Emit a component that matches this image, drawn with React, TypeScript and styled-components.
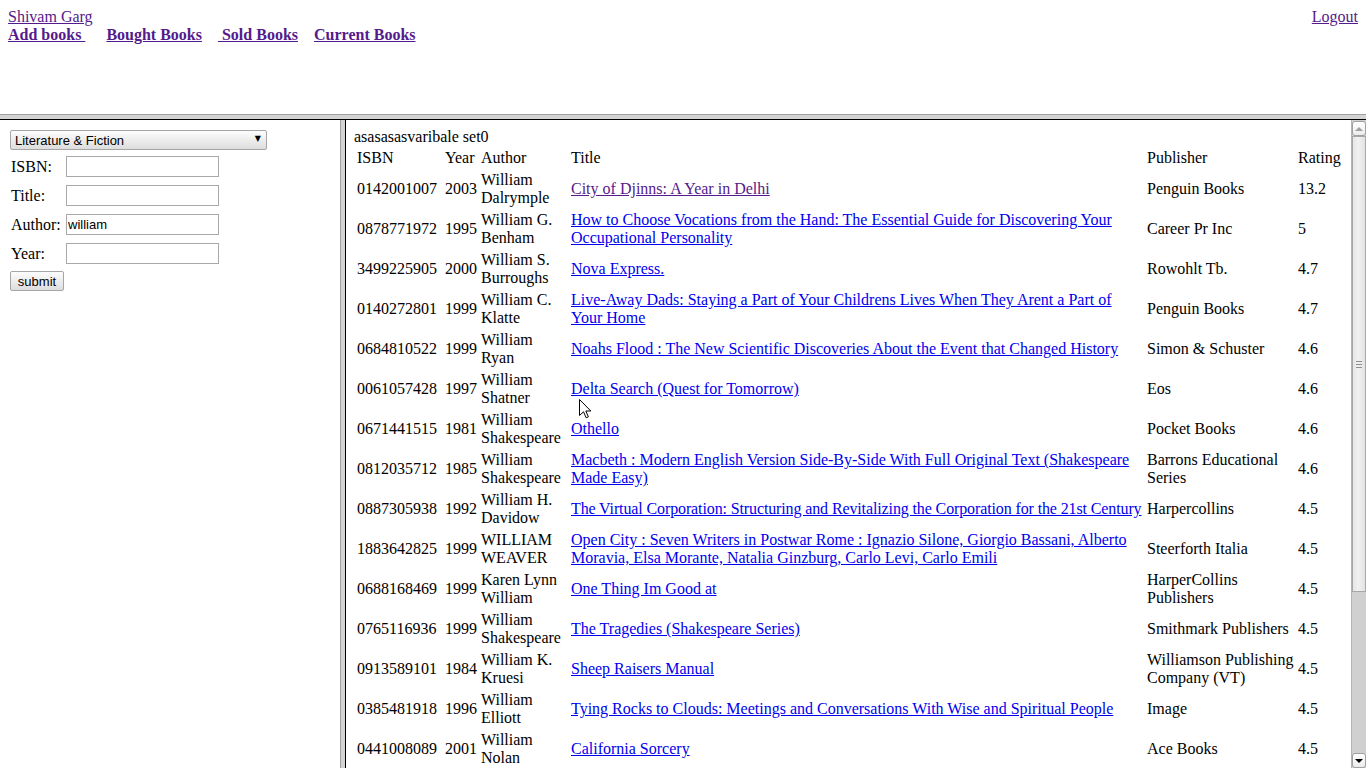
import React from 'react';
import styled, { createGlobalStyle } from 'styled-components';

const GlobalStyle = createGlobalStyle`
  html, body {
    margin: 0;
    height: 100%;
    overflow: hidden;
  }
  body {
    font-family: "Liberation Serif", "Times New Roman", serif;
    font-size: 16px;
    color: #000;
    background: #fff;
  }
  #root {
    height: 100%;
  }
`;

const Frameset = styled.div`
  display: grid;
  grid-template-rows: 114px 6px 1fr;
  height: 100vh;
`;

const TopFrame = styled.header`
  display: flex;
  justify-content: space-between;
  align-items: flex-start;
  padding: 8px;
  line-height: 18px;
`;

const UserBlock = styled.div`
  display: flex;
  flex-direction: column;
`;

const PlainLink = styled.a<{ $visited?: boolean; $tight?: boolean }>`
  color: ${(p) => (p.$visited ? '#551a8b' : '#0000ee')};
  text-decoration: underline;
  letter-spacing: ${(p) => (p.$tight ? '-0.12px' : 'normal')};
  cursor: pointer;
`;

const NavRow = styled.nav`
  display: flex;
  gap: 16px;
`;

const NavLink = styled.a<{ $extra?: number }>`
  color: #551a8b;
  font-weight: bold;
  text-decoration: underline;
  white-space: pre;
  margin-right: ${(p) => p.$extra || 0}px;
  cursor: pointer;
`;

const HSep = styled.div`
  box-sizing: border-box;
  border-top: 1px solid #a0a0a0;
  border-bottom: 1px solid #000;
  background: #d4d4d4;
`;

const BottomRow = styled.div`
  display: grid;
  grid-template-columns: 340px 6px 1fr;
  min-height: 0;
`;

const VSep = styled.div`
  box-sizing: border-box;
  border-left: 1px solid #a0a0a0;
  border-right: 1px solid #000;
  background: #d4d4d4;
`;

const LeftFrame = styled.form`
  padding: 10px 0 0 10px;
  display: flex;
  flex-direction: column;
  align-items: flex-start;
`;

const SelectWrap = styled.div`
  position: relative;
  width: 257px;
  height: 20px;
  &::after {
    content: '▼';
    position: absolute;
    right: 6px;
    top: 4px;
    font-family: "DejaVu Sans", sans-serif;
    font-size: 8px;
    line-height: 10px;
    color: #000;
    pointer-events: none;
  }
`;

const Select = styled.select`
  appearance: none;
  width: 100%;
  height: 20px;
  box-sizing: border-box;
  margin: 0;
  padding: 0 0 0 4px;
  border: 1px solid #a6a6a6;
  border-radius: 2px;
  background: linear-gradient(#fdfdfd, #dddddd);
  font-family: "Liberation Sans", Arial, sans-serif;
  font-size: 13px;
  color: #000;
`;

const FieldGrid = styled.div`
  display: grid;
  grid-template-columns: 49px 153px;
  column-gap: 6px;
  row-gap: 8px;
  align-items: center;
  margin: 6px 0 0 1px;
`;

const Label = styled.label`
  font-size: 16px;
  line-height: 18px;
`;

const TextInput = styled.input`
  box-sizing: border-box;
  width: 153px;
  height: 21px;
  margin: 0;
  padding: 1px 1px;
  border: 1px solid #a9a9a9;
  font-family: "Liberation Sans", Arial, sans-serif;
  font-size: 13px;
  color: #000;
  outline: none;
`;

const SubmitButton = styled.button`
  margin-top: 7px;
  box-sizing: border-box;
  width: 54px;
  height: 20px;
  padding: 0;
  border: 1px solid #a6a6a6;
  border-radius: 2px;
  background: linear-gradient(#fdfdfd, #dddddd);
  font-family: "Liberation Sans", Arial, sans-serif;
  font-size: 13px;
  color: #000;
`;

const RightFrame = styled.div`
  display: flex;
  min-height: 0;
  overflow: hidden;
`;

const Content = styled.div`
  flex: 1;
  min-width: 0;
  overflow: hidden;
  padding: 8px;
  line-height: 18px;
`;

const Note = styled.div`
  height: 18px;
`;

const BookTable = styled.table`
  width: 100%;
  table-layout: fixed;
  border-collapse: separate;
  border-spacing: 2px;
  font-size: 16px;
  line-height: 18px;
  th,
  td {
    padding: 1px;
    text-align: left;
    vertical-align: middle;
  }
  th {
    font-weight: normal;
  }
`;

const Col = styled.col<{ $w?: number }>`
  width: ${(p) => (p.$w ? `${p.$w}px` : 'auto')};
`;

const ScrollBar = styled.div`
  width: 15px;
  display: flex;
  flex-direction: column;
  background: #d0d0d0;
  box-sizing: border-box;
  border-left: 1px solid #b5b5b5;
  padding-top: 1px;
`;

const ScrollButton = styled.div<{ $down?: boolean; $disabled?: boolean }>`
  height: 15px;
  flex: none;
  box-sizing: border-box;
  border: 1px solid #a0a0a0;
  border-radius: 3px;
  background: linear-gradient(#ffffff, #ececec);
  display: flex;
  align-items: center;
  justify-content: center;
  &::before {
    content: '';
    width: 0;
    height: 0;
    border-left: 4px solid transparent;
    border-right: 4px solid transparent;
    ${(p) =>
      p.$down
        ? `border-top: 4px solid ${p.$disabled ? '#a0a0a0' : '#000'};`
        : `border-bottom: 4px solid ${p.$disabled ? '#a0a0a0' : '#000'};`}
  }
`;

const Thumb = styled.div<{ $size: number }>`
  height: ${(p) => p.$size}px;
  flex: none;
  box-sizing: border-box;
  border: 1px solid #a8a8a8;
  background: linear-gradient(90deg, #e6e6e6 0%, #f1f1f1 45%, #e3e3e3 100%);
  display: flex;
  align-items: center;
  justify-content: center;
`;

const Grip = styled.div`
  width: 6px;
  height: 7px;
  background: repeating-linear-gradient(#8e8e8e 0 1px, transparent 1px 3px);
`;

const TrackFill = styled.div`
  flex: 1;
`;

const Cursor = styled.svg`
  position: fixed;
  left: 579px;
  top: 399px;
  pointer-events: none;
`;

type Book = {
  isbn: string;
  year: string;
  author: string;
  title: string;
  publisher: string;
  rating: string;
  visited?: boolean;
  tight?: boolean;
};

const books: Book[] = [
  { isbn: '0142001007', year: '2003', author: 'William Dalrymple', title: 'City of Djinns: A Year in Delhi', publisher: 'Penguin Books', rating: '13.2', visited: true },
  { isbn: '0878771972', year: '1995', author: 'William G. Benham', title: 'How to Choose Vocations from the Hand: The Essential Guide for Discovering Your Occupational Personality', publisher: 'Career Pr Inc', rating: '5' },
  { isbn: '3499225905', year: '2000', author: 'William S. Burroughs', title: 'Nova Express.', publisher: 'Rowohlt Tb.', rating: '4.7' },
  { isbn: '0140272801', year: '1999', author: 'William C. Klatte', title: 'Live-Away Dads: Staying a Part of Your Childrens Lives When They Arent a Part of Your Home', publisher: 'Penguin Books', rating: '4.7' },
  { isbn: '0684810522', year: '1999', author: 'William Ryan', title: 'Noahs Flood : The New Scientific Discoveries About the Event that Changed History', publisher: 'Simon & Schuster', rating: '4.6' },
  { isbn: '0061057428', year: '1997', author: 'William Shatner', title: 'Delta Search (Quest for Tomorrow)', publisher: 'Eos', rating: '4.6' },
  { isbn: '0671441515', year: '1981', author: 'William Shakespeare', title: 'Othello', publisher: 'Pocket Books', rating: '4.6' },
  { isbn: '0812035712', year: '1985', author: 'William Shakespeare', title: 'Macbeth : Modern English Version Side-By-Side With Full Original Text (Shakespeare Made Easy)', publisher: 'Barrons Educational Series', rating: '4.6' },
  { isbn: '0887305938', year: '1992', author: 'William H. Davidow', title: 'The Virtual Corporation: Structuring and Revitalizing the Corporation for the 21st Century', publisher: 'Harpercollins', rating: '4.5', tight: true },
  { isbn: '1883642825', year: '1999', author: 'WILLIAM WEAVER', title: 'Open City : Seven Writers in Postwar Rome : Ignazio Silone, Giorgio Bassani, Alberto Moravia, Elsa Morante, Natalia Ginzburg, Carlo Levi, Carlo Emili', publisher: 'Steerforth Italia', rating: '4.5' },
  { isbn: '0688168469', year: '1999', author: 'Karen Lynn William', title: 'One Thing Im Good at', publisher: 'HarperCollins Publishers', rating: '4.5' },
  { isbn: '0765116936', year: '1999', author: 'William Shakespeare', title: 'The Tragedies (Shakespeare Series)', publisher: 'Smithmark Publishers', rating: '4.5' },
  { isbn: '0913589101', year: '1984', author: 'William K. Kruesi', title: 'Sheep Raisers Manual', publisher: 'Williamson Publishing Company (VT)', rating: '4.5' },
  { isbn: '0385481918', year: '1996', author: 'William Elliott', title: 'Tying Rocks to Clouds: Meetings and Conversations With Wise and Spiritual People', publisher: 'Image', rating: '4.5' },
  { isbn: '0441008089', year: '2001', author: 'William Nolan', title: 'California Sorcery', publisher: 'Ace Books', rating: '4.5' },
];

function App() {
  return (
    <>
      <GlobalStyle />
      <Frameset>
        <TopFrame>
          <UserBlock>
            <PlainLink $visited>Shivam Garg</PlainLink>
            <NavRow>
              <NavLink $extra={5}>Add books </NavLink>
              <NavLink>Bought Books</NavLink>
              <NavLink> Sold Books</NavLink>
              <NavLink>Current Books</NavLink>
            </NavRow>
          </UserBlock>
          <PlainLink $visited>Logout</PlainLink>
        </TopFrame>
        <HSep />
        <BottomRow>
          <LeftFrame onSubmit={(e) => e.preventDefault()}>
            <SelectWrap>
              <Select defaultValue="lit">
                <option value="lit">Literature &amp; Fiction</option>
                <option value="bio">Biographies &amp; Memoirs</option>
                <option value="sci">Science</option>
              </Select>
            </SelectWrap>
            <FieldGrid>
              <Label>ISBN:</Label>
              <TextInput />
              <Label>Title:</Label>
              <TextInput />
              <Label>Author:</Label>
              <TextInput defaultValue="william" />
              <Label>Year:</Label>
              <TextInput />
            </FieldGrid>
            <SubmitButton type="submit">submit</SubmitButton>
          </LeftFrame>
          <VSep />
          <RightFrame>
            <Content>
              <Note>asasasasvaribale set0</Note>
              <BookTable>
                <colgroup>
                  <Col $w={86} />
                  <Col $w={34} />
                  <Col $w={88} />
                  <Col $w={574} />
                  <Col $w={149} />
                  <Col />
                </colgroup>
                <thead>
                  <tr>
                    <th>ISBN</th>
                    <th>Year</th>
                    <th>Author</th>
                    <th>Title</th>
                    <th>Publisher</th>
                    <th>Rating</th>
                  </tr>
                </thead>
                <tbody>
                  {books.map((b) => (
                    <tr key={b.isbn}>
                      <td>{b.isbn}</td>
                      <td>{b.year}</td>
                      <td>{b.author}</td>
                      <td>
                        <PlainLink $visited={b.visited} $tight={b.tight}>
                          {b.title}
                        </PlainLink>
                      </td>
                      <td>{b.publisher}</td>
                      <td>{b.rating}</td>
                    </tr>
                  ))}
                </tbody>
              </BookTable>
            </Content>
            <ScrollBar>
              <ScrollButton $disabled />
              <Thumb $size={456}>
                <Grip />
              </Thumb>
              <TrackFill />
              <ScrollButton $down />
            </ScrollBar>
          </RightFrame>
        </BottomRow>
      </Frameset>
      <Cursor width="13" height="20" viewBox="0 0 13 20">
        <path
          d="M0.5 0.5 L0.5 16.5 L4.5 12.8 L7.2 18.8 L9.4 17.8 L6.8 12 L11.8 12 Z"
          fill="#fff"
          stroke="#000"
          strokeWidth="1"
          strokeLinejoin="miter"
        />
      </Cursor>
    </>
  );
}

export default App;
